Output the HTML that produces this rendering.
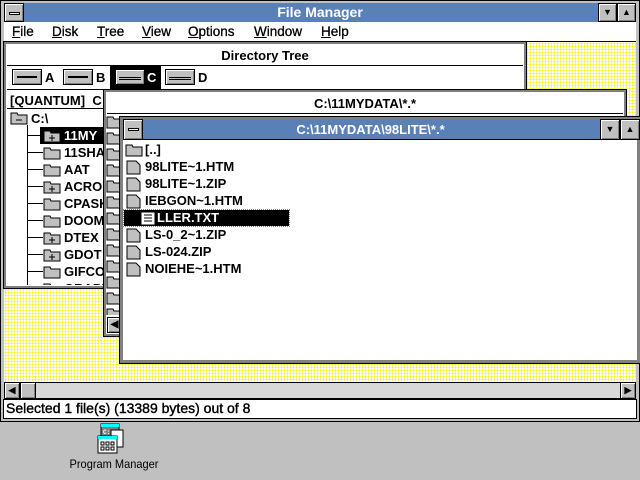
<!DOCTYPE html>
<html><head><style>
*{margin:0;padding:0;box-sizing:border-box}
body{width:640px;height:480px;background:#c0c0c0;position:relative;overflow:hidden;font-family:"Liberation Sans",sans-serif;font-weight:bold;font-size:13px;color:#000}
.a{position:absolute}
.blue{background:#5a80b8}
.yel{background-color:#fff;background-image:radial-gradient(circle,#f4f400 0.9px,transparent 1px);background-size:3px 3px}
.btn{position:absolute;background:#c0c0c0;border:1px solid #000;box-shadow:inset 1px 1px #fff,inset -1px -1px #808080}
.t{position:absolute;white-space:nowrap;line-height:15px}
.hl{position:absolute;height:1px;background:#000}
</style></head><body>
<div class="a" style="left:0;top:0;width:640px;height:422px;background:#c0c0c0;border:1px solid #000"></div>
<div class="a blue" style="left:4px;top:3px;width:632px;height:19px"></div>
<div class="btn" style="left:4px;top:3px;width:20px;height:19px"><div class="a" style="left:4px;top:8px;width:11px;height:3px;background:#fff;border:1px solid #000"></div></div>
<div class="t" style="left:0;width:640px;text-align:center;top:5px;color:#fff;font-size:14px">File Manager</div>
<div class="btn" style="left:598px;top:3px;width:19px;height:19px;font-size:9px;text-align:center;line-height:17px">▼</div>
<div class="btn" style="left:617px;top:3px;width:19px;height:19px;font-size:9px;text-align:center;line-height:17px">▲</div>
<div class="a" style="left:4px;top:22px;width:632px;height:20px;background:#fff;border-bottom:1px solid #000"></div>
<div class="t" style="left:12px;top:24px;font-size:13.5px;font-weight:normal;-webkit-text-stroke:0.3px #000"><u>F</u>ile</div>
<div class="t" style="left:52px;top:24px;font-size:13.5px;font-weight:normal;-webkit-text-stroke:0.3px #000"><u>D</u>isk</div>
<div class="t" style="left:97px;top:24px;font-size:13.5px;font-weight:normal;-webkit-text-stroke:0.3px #000"><u>T</u>ree</div>
<div class="t" style="left:142px;top:24px;font-size:13.5px;font-weight:normal;-webkit-text-stroke:0.3px #000"><u>V</u>iew</div>
<div class="t" style="left:188px;top:24px;font-size:13.5px;font-weight:normal;-webkit-text-stroke:0.3px #000"><u>O</u>ptions</div>
<div class="t" style="left:254px;top:24px;font-size:13.5px;font-weight:normal;-webkit-text-stroke:0.3px #000"><u>W</u>indow</div>
<div class="t" style="left:321px;top:24px;font-size:13.5px;font-weight:normal;-webkit-text-stroke:0.3px #000"><u>H</u>elp</div>
<div class="a yel" style="left:4px;top:42px;width:632px;height:340px"></div>

<div class="a" style="left:4px;top:42px;width:522px;height:246px;background:#fff;border:2px solid #808080;outline:1px solid #000"></div>
<div class="a" style="left:7px;top:44px;width:516px;height:22px;background:#fff;border-bottom:1px solid #000"></div>
<div class="t" style="left:7px;width:516px;text-align:center;top:48px">Directory Tree</div>
<div class="hl" style="left:7px;top:89px;width:516px"></div>
<div class="btn" style="left:12px;top:69px;width:30px;height:16px"><div class="a" style="left:4px;top:6px;width:20px;height:2px;background:#000"></div></div>
<div class="t" style="left:45px;top:70px">A</div>
<div class="btn" style="left:63px;top:69px;width:30px;height:16px"><div class="a" style="left:4px;top:6px;width:20px;height:2px;background:#000"></div></div>
<div class="t" style="left:96px;top:70px">B</div>
<div class="a" style="left:110px;top:65px;width:51px;height:24px;background:#000"></div>
<div class="btn" style="left:115px;top:69px;width:30px;height:16px"><div class="a" style="left:3px;top:7px;width:22px;height:3px;border-top:1px solid #000;border-bottom:1px solid #000"></div></div>
<div class="t" style="left:147px;top:70px;color:#fff">C</div>
<div class="btn" style="left:165px;top:69px;width:30px;height:16px"><div class="a" style="left:3px;top:7px;width:22px;height:3px;border-top:1px solid #000;border-bottom:1px solid #000"></div></div>
<div class="t" style="left:198px;top:70px">D</div>
<div class="t" style="left:10px;top:93px">[QUANTUM]&nbsp; C</div>
<div class="hl" style="left:7px;top:108px;width:100px"></div>
<div class="a" style="left:0;top:0;width:640px;height:285px;overflow:hidden">
<div class="a" style="left:27px;top:125px;width:1px;height:160px;background:#000"></div>
<svg class="a" style="left:10px;top:111px" width="19" height="14"><path d="M1 2h6l1 2h9v9H1z" fill="#c0c0c0" stroke="#000"/><path d="M6 9h6" stroke="#000"/></svg>
<div class="t" style="left:31px;top:111px">C:\</div>
<div class="a" style="left:40px;top:127px;width:66px;height:17px;background:#000"></div>
<div id="tree"></div>
</div>

<div class="a" style="left:104px;top:90px;width:522px;height:246px;background:#fff;border:2px solid #808080;outline:1px solid #000"></div>
<div class="a" style="left:107px;top:93px;width:516px;height:21px;background:#fff;border-bottom:1px solid #000"></div>
<div class="t" style="left:107px;width:516px;text-align:center;top:96px">C:\11MYDATA\*.*</div>
<div class="a" style="left:0;top:0;width:640px;height:315px;overflow:hidden"><div id="mid"></div></div>
<div class="btn" style="left:107px;top:317px;width:15px;height:16px;font-size:10px;text-align:center;line-height:14px">◀</div>

<div class="a" style="left:120px;top:117px;width:520px;height:246px;background:#fff;border:3px solid #808080;outline:1px solid #000"></div>
<div class="a blue" style="left:123px;top:119px;width:517px;height:21px;border-bottom:1px solid #000"></div>
<div class="btn" style="left:123px;top:119px;width:20px;height:21px"><div class="a" style="left:4px;top:8px;width:11px;height:3px;background:#fff;border:1px solid #000"></div></div>
<div class="t" style="left:143px;width:455px;text-align:center;top:122px;color:#fff">C:\11MYDATA\98LITE\*.*</div>
<div class="btn" style="left:600px;top:119px;width:20px;height:21px;font-size:9px;text-align:center;line-height:19px">▼</div>
<div class="btn" style="left:620px;top:119px;width:20px;height:21px;font-size:9px;text-align:center;line-height:19px">▲</div>
<div id="files"></div>

<div class="a" style="left:4px;top:382px;width:632px;height:17px;background:#d8d8d8;border-top:1px solid #000;border-bottom:1px solid #000"></div>
<div class="btn" style="left:4px;top:382px;width:16px;height:17px;font-size:9px;text-align:center;line-height:15px">◀</div>
<div class="btn" style="left:20px;top:382px;width:16px;height:17px"></div>
<div class="btn" style="left:620px;top:382px;width:16px;height:17px;font-size:9px;text-align:center;line-height:15px">▶</div>
<div class="a" style="left:3px;top:399px;width:634px;height:20px;background:#fff;border:1px solid #000"></div>
<div class="t" style="left:6px;top:401px;font-weight:normal;font-size:14px;-webkit-text-stroke:0.4px #000">Selected 1 file(s) (13389 bytes) out of 8</div>

<svg class="a" style="left:96px;top:422px" width="34" height="34">
<rect x="5" y="2" width="18" height="12" fill="#808080" stroke="#000"/><rect x="5" y="2" width="18" height="3" fill="#0ff"/>
<text x="7" y="12" font-size="6" fill="#fff" font-family="Liberation Mono">C:</text>
<rect x="15" y="8" width="12" height="17" fill="#fff" stroke="#000"/>
<rect x="2" y="14" width="19" height="17" fill="#fff" stroke="#000"/><rect x="2" y="14" width="19" height="3" fill="#0ff"/>
<path d="M5 20h3v3H5zM10 20h3v3h-3zM15 20h3v3h-3zM5 25h3v3H5zM10 25h3v3h-3zM15 25h3v3h-3z" fill="none" stroke="#000"/>
</svg>
<div class="t" style="left:64px;width:100px;text-align:center;top:457px;font-weight:normal;font-size:12px;transform:scaleX(0.92)">Program Manager</div>

<script>
var tr=["11MY","11SHA","AAT","ACRO","CPASK","DOOM","DTEX","GDOT","GIFCO","GRAPH"],plus=[1,0,0,1,0,0,1,1,0,0],h="";
for(var i=0;i<tr.length;i++){var y=128+i*17;
h+='<div class="hl" style="left:28px;top:'+(y+7)+'px;width:15px"></div>';
h+='<svg class="a" style="left:43px;top:'+(y+1)+'px" width="19" height="14"><path d="M1 2h6l1 2h9v9H1z" fill="#c0c0c0" stroke="#000"/>'+(plus[i]?'<path d="M6 9h6M9 6v6" stroke="#000"/>':'')+'</svg>';
h+='<div class="t" style="left:64px;top:'+y+'px;'+(i==0?'color:#fff':'')+'">'+tr[i]+'</div>';}
document.getElementById('tree').innerHTML=h;
var m="";
for(var j=0;j<13;j++){var y2=115+j*16;m+='<svg class="a" style="left:106px;top:'+y2+'px" width="16" height="14"><path d="M1 2h6l1 2h8v9H1z" fill="#c0c0c0" stroke="#000"/></svg>';}
document.getElementById('mid').innerHTML=m;
var f=["[..]","98LITE~1.HTM","98LITE~1.ZIP","IEBGON~1.HTM","LLER.TXT","LS-0_2~1.ZIP","LS-024.ZIP","NOIEHE~1.HTM"],g="";
for(var k=0;k<f.length;k++){var y=141+k*17;
if(k==4){g+='<div class="a" style="left:124px;top:'+(y+1)+'px;width:165px;height:16px;background:#000;outline:1px dotted #888"></div>';
g+='<svg class="a" style="left:140px;top:'+(y+2)+'px" width="18" height="15"><rect x="1" y="1" width="14" height="13" fill="#fff" stroke="#000"/><path d="M4 4h8M4 7h8M4 10h8" stroke="#000"/></svg>';
g+='<div class="t" style="left:157px;top:'+(y+1)+'px;color:#fff">'+f[k]+'</div>';continue;}
if(k==0)g+='<svg class="a" style="left:125px;top:'+(y+2)+'px" width="19" height="14"><path d="M1 2h6l1 2h9v9H1z" fill="#c0c0c0" stroke="#000"/></svg>';
else g+='<svg class="a" style="left:126px;top:'+(y+2)+'px" width="16" height="15"><path d="M1 1h9l4 4v9H1z" fill="#c0c0c0" stroke="#000"/></svg>';
g+='<div class="t" style="left:145px;top:'+(y+1)+'px">'+f[k]+'</div>';}
document.getElementById('files').innerHTML=g;
</script>
</body></html>
